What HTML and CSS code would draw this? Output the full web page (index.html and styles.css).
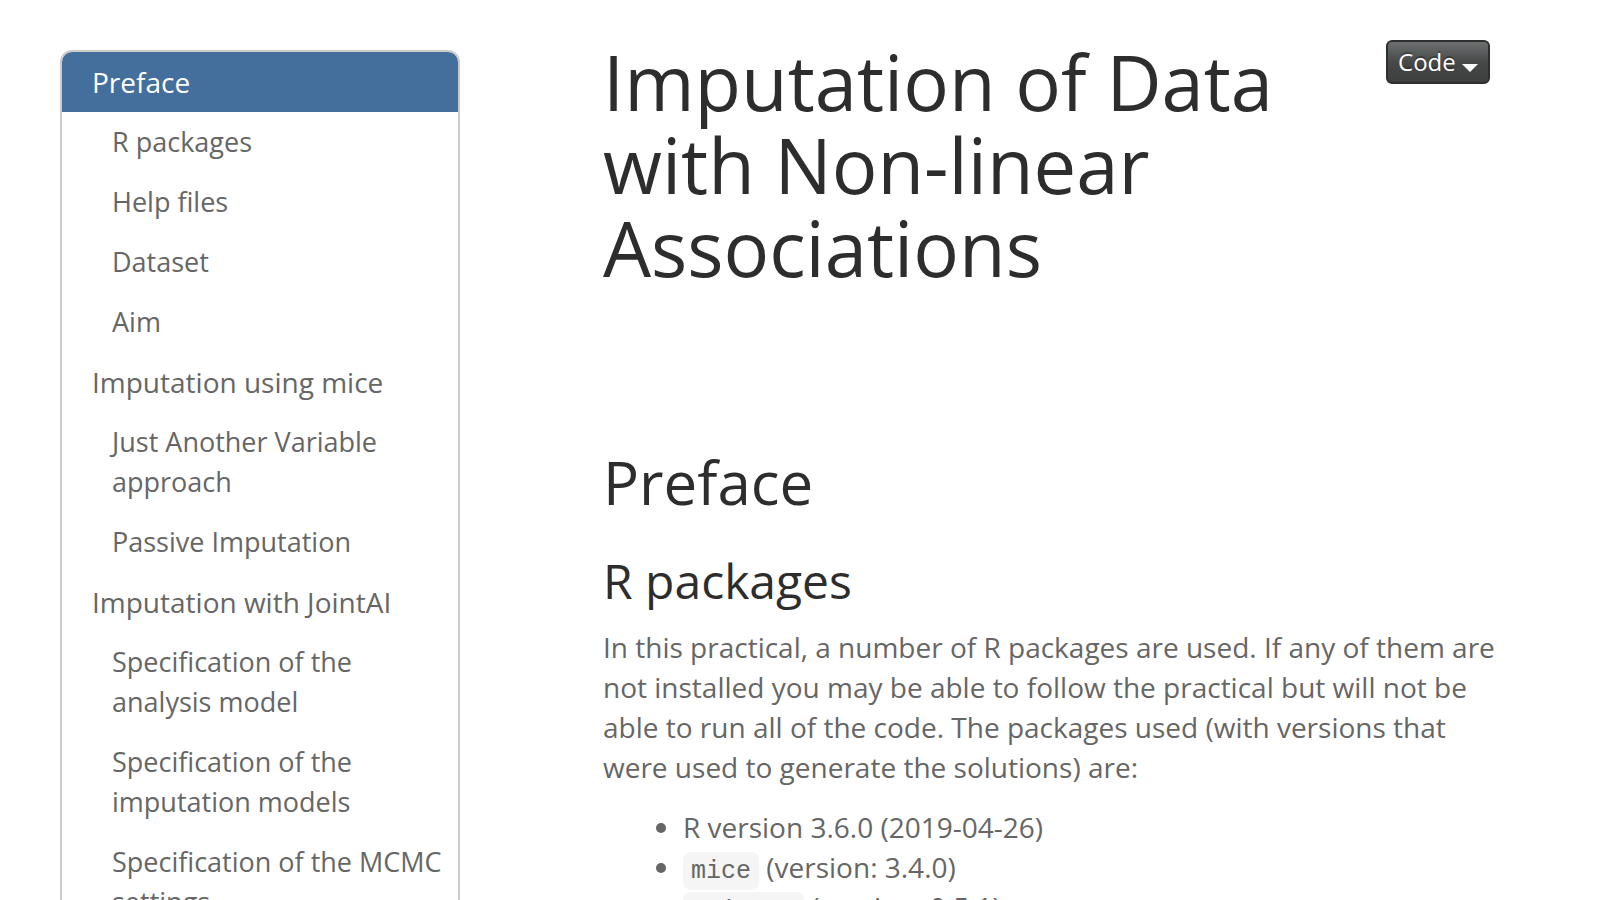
FILE: index.html
```html
<!DOCTYPE html>
<html lang="en">
<head>
<meta charset="utf-8">
<title>Imputation of Data with Non-linear Associations</title>
<link rel="stylesheet" href="styles.css">
</head>
<body>
<div class="layout">
  <nav class="toc" aria-label="Table of contents">
    <a class="toc-link active" href="#preface">Preface</a>
    <a class="toc-link sub" href="#r-packages">R packages</a>
    <a class="toc-link sub" href="#help-files">Help files</a>
    <a class="toc-link sub" href="#dataset">Dataset</a>
    <a class="toc-link sub" href="#aim">Aim</a>
    <a class="toc-link" href="#mice">Imputation using mice</a>
    <a class="toc-link sub" href="#jav">Just Another Variable approach</a>
    <a class="toc-link sub" href="#passive">Passive Imputation</a>
    <a class="toc-link" href="#jointai">Imputation with JointAI</a>
    <a class="toc-link sub" href="#analysis-model">Specification of the analysis model</a>
    <a class="toc-link sub" href="#imputation-models">Specification of the imputation models</a>
    <a class="toc-link sub" href="#mcmc">Specification of the MCMC settings</a>
  </nav>
  <main class="content">
    <header class="header">
      <h1 class="title">Imputation of Data with Non-linear Associations</h1>
      <button class="code-button" type="button">Code <span class="caret"></span></button>
    </header>
    <section id="preface">
      <h1 class="section-title">Preface</h1>
      <section id="r-packages">
        <h2 class="subsection-title">R packages</h2>
        <p class="text">In this practical, a number of R packages are used. If any of them are not installed you may be able to follow the practical but will not be able to run all of the code. The packages used (with versions that were used to generate the solutions) are:</p>
        <ul class="packages">
          <li>R version 3.6.0 (2019-04-26)</li>
          <li><code class="code">mice</code> (version: 3.4.0)</li>
          <li><code class="code">JointAI</code> (version: 0.5.1)</li>
        </ul>
      </section>
    </section>
  </main>
</div>
</body>
</html>
```
FILE: styles.css
```css
* {
  box-sizing: border-box;
}

body {
  margin: 0;
  height: 100vh;
  overflow: hidden;
  background: #fff;
  color: #666;
  font-family: "Open Sans", "Liberation Sans", sans-serif;
  font-size: 28px;
  line-height: 40px;
}

.layout {
  display: grid;
  grid-template-columns: 25vw minmax(0, 1fr);
  column-gap: 143px;
  align-items: start;
  padding: 40px 100px 0 60px;
}

.toc {
  margin-top: 10px;
  border: 2px solid #ccc;
  border-radius: 12px;
  overflow: hidden;
}

.toc-link {
  display: block;
  padding: 10px 4px 10px 30px;
  color: #666;
  text-decoration: none;
}

.toc-link.sub {
  padding-left: 50px;
  font-size: 27px;
}

.toc-link.active {
  background: #446e9b;
  color: #fff;
}

.header {
  display: flex;
  justify-content: space-between;
  align-items: flex-start;
  gap: 40px;
  margin-bottom: 160px;
  padding-right: 10px;
}

.title,
.section-title,
.subsection-title {
  margin: 0;
  color: #2d2d2d;
  font-weight: 400;
}

.title {
  font-size: 76px;
  line-height: 83px;
}

.section-title {
  margin-bottom: 39px;
  font-size: 60px;
  line-height: 66px;
}

.subsection-title {
  margin-bottom: 20px;
  font-size: 48px;
  line-height: 53px;
}

.code-button {
  flex: none;
  padding: 2px 10px;
  border: 2px solid #2e2f2f;
  border-radius: 6px;
  background: linear-gradient(#6d7070, #474949 50%, #3d3f3f);
  color: #fff;
  font: inherit;
  font-size: 24px;
  line-height: 36px;
  text-shadow: 0 -2px 0 rgba(0, 0, 0, 0.3);
}

.caret {
  display: inline-block;
  margin-top: 6px;
  vertical-align: middle;
  border-top: 8px solid #fff;
  border-right: 8px solid transparent;
  border-left: 8px solid transparent;
}

.text {
  margin: 0 0 20px;
}

.packages {
  margin: 0;
  padding-left: 80px;
}

.code {
  padding: 5px 8px 4px;
  border-radius: 8px;
  background: #f5f5f5;
  font-family: "Courier New", "Liberation Mono", monospace;
  font-size: 25px;
  line-height: 30px;
}
```
